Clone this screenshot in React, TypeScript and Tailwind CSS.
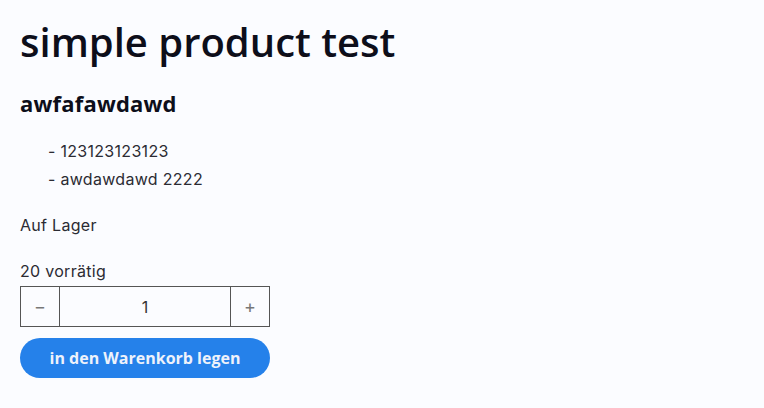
import * as React from "react";

export default function App() {
  return (
    <div className="min-h-[408px] w-full bg-[#fbfcff] px-5 pt-[16px] text-[#2b2b33] [font-family:Inter,'Noto_Sans',sans-serif]">
      <h1 className="text-[40px] font-semibold leading-[52px] text-[#0d0e1a] [font-family:'Open_Sans',sans-serif]">simple product test</h1>
      <h2 className="mt-[21px] text-[22px] font-bold leading-[28px] tracking-[0.2px] text-[#0d0e1a] [font-family:'Open_Sans',sans-serif]">awfafawdawd</h2>
      <ul className="mt-[20px] pl-[28px] text-[16px] leading-[28px] tracking-[0.3px]">
        <li>- 123123123123</li>
        <li>- awdawdawd 2222</li>
      </ul>
      <p className="mt-[20px] text-[16px] leading-[24px] tracking-[0.3px]">Auf Lager</p>
      <p className="mt-[22px] text-[16px] leading-[24px] tracking-[0.3px]">20 vorrätig</p>
      <div className="mt-[3px] flex h-[41px] w-[250px] border border-[#555]">
        <button className="w-[39px] border-r border-[#555] text-[18px] text-[#777]">−</button>
        <div className="flex flex-1 items-center justify-center text-[16px] text-[#333]">1</div>
        <button className="w-[39px] border-l border-[#555] text-[18px] text-[#777]">+</button>
      </div>
      <button className="mt-[11px] h-[40px] w-[250px] rounded-full bg-[#2581ea] text-[16px] font-bold text-[#eef2fb] [font-family:'Open_Sans',sans-serif]">
        in den Warenkorb legen
      </button>
    </div>
  );
}
